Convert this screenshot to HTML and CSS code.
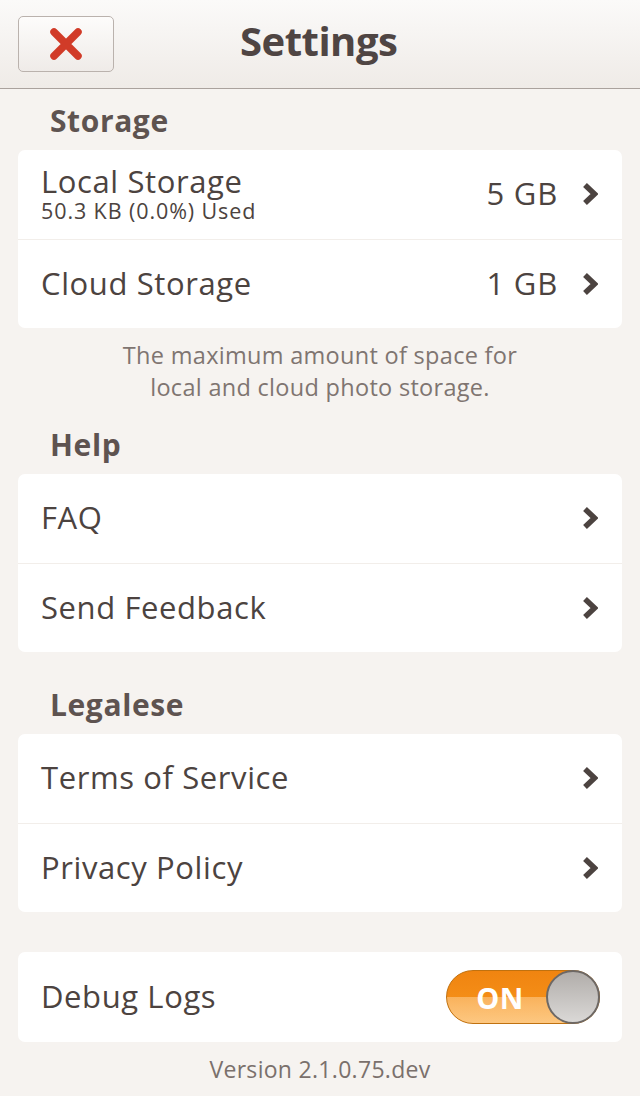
FILE: index.html
```html
<!DOCTYPE html>
<html>
<head>
<meta charset="utf-8">
<link rel="stylesheet" href="styles.css">
</head>
<body>
<header class="topbar">
  <button class="close-btn" aria-label="Close">
    <svg width="34" height="34" viewBox="0 0 34 34"><path d="M5 5 L29 29 M29 5 L5 29" stroke="#d13b28" stroke-width="7.5" stroke-linecap="round"/></svg>
  </button>
  <h1 class="title">Settings</h1>
</header>

<h2 class="section-title">Storage</h2>
<div class="card">
  <div class="row row-first">
    <div class="label-block">
      <div class="label">Local Storage</div>
      <div class="sublabel">50.3 KB (0.0%) Used</div>
    </div>
    <div class="value">5 GB</div>
    <svg class="chev" width="16" height="24" viewBox="0 0 16 24"><path d="M3 3 L12.5 12 L3 21" fill="none" stroke="#4c4340" stroke-width="5.5"/></svg>
  </div>
  <div class="row">
    <div class="label">Cloud Storage</div>
    <div class="value">1 GB</div>
    <svg class="chev" width="16" height="24" viewBox="0 0 16 24"><path d="M3 3 L12.5 12 L3 21" fill="none" stroke="#4c4340" stroke-width="5.5"/></svg>
  </div>
</div>
<p class="note">The maximum amount of space for<br>local and cloud photo storage.</p>

<h2 class="section-title">Help</h2>
<div class="card">
  <div class="row row-first">
    <div class="label">FAQ</div>
    <svg class="chev" width="16" height="24" viewBox="0 0 16 24"><path d="M3 3 L12.5 12 L3 21" fill="none" stroke="#4c4340" stroke-width="5.5"/></svg>
  </div>
  <div class="row">
    <div class="label">Send Feedback</div>
    <svg class="chev" width="16" height="24" viewBox="0 0 16 24"><path d="M3 3 L12.5 12 L3 21" fill="none" stroke="#4c4340" stroke-width="5.5"/></svg>
  </div>
</div>

<h2 class="section-title section-legal">Legalese</h2>
<div class="card">
  <div class="row row-first">
    <div class="label">Terms of Service</div>
    <svg class="chev" width="16" height="24" viewBox="0 0 16 24"><path d="M3 3 L12.5 12 L3 21" fill="none" stroke="#4c4340" stroke-width="5.5"/></svg>
  </div>
  <div class="row">
    <div class="label">Privacy Policy</div>
    <svg class="chev" width="16" height="24" viewBox="0 0 16 24"><path d="M3 3 L12.5 12 L3 21" fill="none" stroke="#4c4340" stroke-width="5.5"/></svg>
  </div>
</div>

<div class="card card-debug">
  <div class="row row-debug">
    <div class="label">Debug Logs</div>
    <div class="toggle">
      <span class="toggle-text">ON</span>
      <span class="knob"></span>
    </div>
  </div>
</div>
<p class="version">Version 2.1.0.75.dev</p>
</body>
</html>
```

FILE: styles.css
```css
html, body {
  margin: 0;
  padding: 0;
}
body {
  background: #f6f3f0;
  font-family: "Open Sans", "Liberation Sans", sans-serif;
  color: #4c4340;
  width: 640px;
  height: 1096px;
  overflow: hidden;
}
.topbar {
  height: 88px;
  border-bottom: 1px solid #aaa29d;
  background: linear-gradient(#fbfaf9, #efebe7);
  display: flex;
  align-items: center;
}
.close-btn {
  margin-left: 18px;
  width: 96px;
  height: 56px;
  border: 1px solid #bab2ad;
  border-radius: 5px;
  background: linear-gradient(#fdfcfb, #efebe8);
  display: flex;
  align-items: center;
  justify-content: center;
  padding: 0;
}
.title {
  margin: 0 0 7px 126px;
  font-size: 40px;
  font-weight: 700;
  color: #4f4543;
  letter-spacing: -0.5px;
  line-height: 48px;
}
.section-title {
  margin: 14px 0 11px 50px;
  font-size: 30px;
  line-height: 36px;
  font-weight: 700;
  color: #5e5350;
  letter-spacing: 0.6px;
}
.section-legal {
  margin-top: 35px;
}
.card {
  margin: 0 18px;
  background: #fff;
  border-radius: 7px;
}
.row {
  box-sizing: border-box;
  height: 88px;
  display: flex;
  align-items: center;
  padding: 0 24px 3px 23px;
}
.row-first {
  height: 90px;
  border-bottom: 1px solid #f2eeea;
}
.label {
  font-size: 31px;
  line-height: 34px;
  letter-spacing: 0.6px;
  flex: 1;
}
.label-block {
  display: flex;
  flex-direction: column;
  flex: 1;
  margin-top: 2px;
}
.label-block .label {
  line-height: 32px;
}
.sublabel {
  margin-top: 1px;
  font-size: 21.5px;
  line-height: 26px;
  letter-spacing: 0.9px;
}
.value {
  font-size: 31px;
  letter-spacing: 0.8px;
  margin-right: 24px;
}
.chev {
  display: block;
  margin-top: 2px;
}
.note {
  margin: 11px 0 0;
  text-align: center;
  font-size: 23.5px;
  line-height: 32px;
  color: #7f7571;
  letter-spacing: 0.3px;
}
.note + .section-title {
  margin-top: 24px;
}
.card-debug {
  margin-top: 40px;
}
.row-debug {
  height: 90px;
  padding-right: 22px;
}
.toggle {
  width: 154px;
  height: 54px;
  border-radius: 27px;
  box-sizing: border-box;
  border: 1px solid #c0710f;
  background:
    linear-gradient(rgba(255,255,255,0) 50%, rgba(255,214,160,0.5) 50%, rgba(255,220,170,0.7) 100%),
    linear-gradient(#f08410, #f8961e);
  display: flex;
  align-items: center;
  position: relative;
  margin-top: 3px;
}
.toggle-text {
  color: #fff;
  font-weight: 700;
  font-size: 29px;
  width: 106px;
  text-align: center;
  letter-spacing: 0.5px;
}
.knob {
  position: absolute;
  right: -1px;
  top: -1px;
  width: 54px;
  height: 54px;
  box-sizing: border-box;
  border-radius: 50%;
  border: 2px solid #6d6865;
  background: linear-gradient(#b1adaa, #dad8d6);
}
.version {
  margin: 11px 0 0;
  text-align: center;
  font-size: 23px;
  line-height: 32px;
  color: #7a706c;
  letter-spacing: 0.3px;
}
```
